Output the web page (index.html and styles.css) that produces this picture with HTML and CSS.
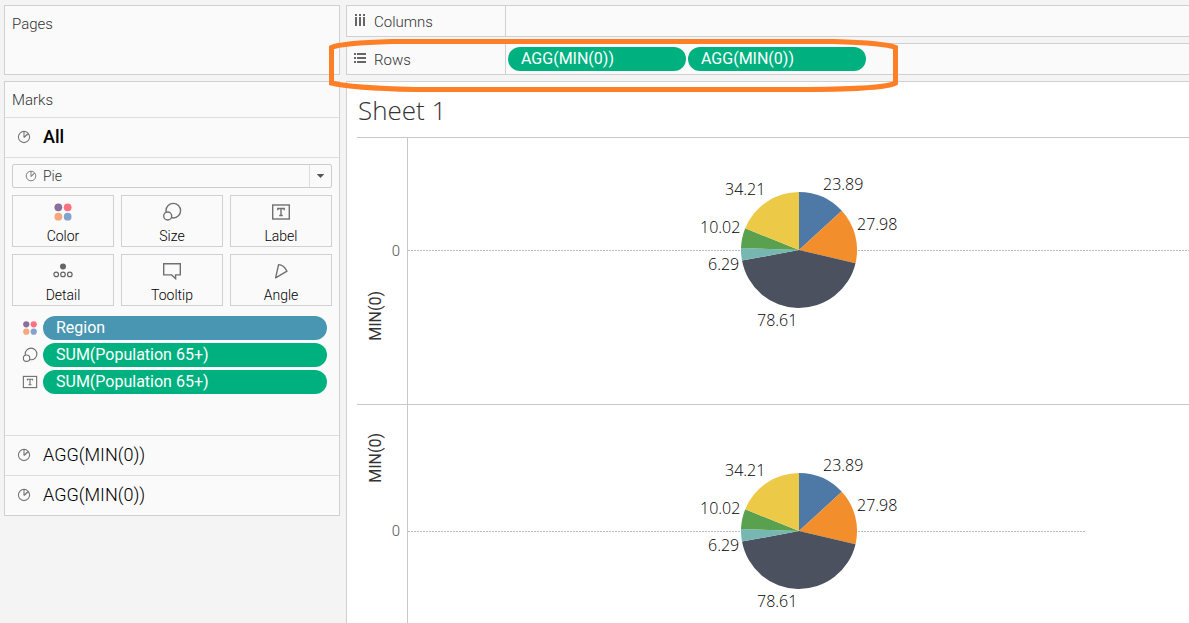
FILE: index.html
```html
<!DOCTYPE html>
<html lang="en">
<head>
<meta charset="utf-8">
<title>Sheet 1</title>
<link rel="stylesheet" href="styles.css">
</head>
<body>
<svg class="defs" aria-hidden="true">
  <symbol id="i-pie" viewBox="0 0 14 14"><g fill="none" stroke="#777" stroke-width="1.1"><circle cx="7" cy="7" r="5.6"/><path d="M7 7.5V1.4M7 7.5l4.4-3.9M7 7.5L10.5 4"/></g></symbol>
  <symbol id="i-color" viewBox="0 0 18 18"><circle cx="4.8" cy="4.8" r="3.5" fill="#8a709a"/><circle cx="13.2" cy="4.8" r="3.5" fill="#fb7181"/><circle cx="4.8" cy="13.2" r="3.5" fill="#f6a77c"/><circle cx="13.2" cy="13.2" r="3.5" fill="#82a3cd"/></symbol>
  <symbol id="i-size" viewBox="0 0 20 20"><g fill="#fafafa" stroke="#707070" stroke-width="1.4"><circle cx="11.3" cy="8.7" r="7.3"/><circle cx="5.7" cy="14" r="4"/></g></symbol>
  <symbol id="i-label" viewBox="0 0 20 20"><g fill="none" stroke="#707070" stroke-width="1.4"><rect x="1.7" y="3" width="16.6" height="14"/><path d="M6.8 8.2V6.5h6.4v1.7M10 6.5v7M8.2 13.5h3.6"/></g></symbol>
  <symbol id="i-detail" viewBox="0 0 20 20"><circle cx="10" cy="5.6" r="3" fill="#666"/><g fill="none" stroke="#666" stroke-width="1.2"><circle cx="3.2" cy="13.4" r="2.3"/><circle cx="10" cy="13.4" r="2.3"/><circle cx="16.8" cy="13.4" r="2.3"/></g></symbol>
  <symbol id="i-tooltip" viewBox="0 0 20 20"><path d="M1.7 2.7h16.6v11.2h-4.7v3.8l-3.9-3.8H1.7z" fill="none" stroke="#707070" stroke-width="1.4"/></symbol>
  <symbol id="i-angle" viewBox="0 0 20 20"><path d="M7.6 3.6L4.6 16.8l11.4-6.6Q13 4 7.6 3.6z" fill="none" stroke="#707070" stroke-width="1.4" stroke-linejoin="round"/></symbol>
  <symbol id="i-cols" viewBox="0 0 14 14"><path d="M3 1v2M7 1v2M11 1v2M3 4v9M7 4v9M11 4v9" stroke="#666" stroke-width="2"/></symbol>
  <symbol id="i-rows" viewBox="0 0 14 14"><path d="M1 3h2M1 7h2M1 11h2M4 3h9M4 7h9M4 11h9" stroke="#666" stroke-width="2"/></symbol>
  <symbol id="pie" viewBox="0 0 210 170">
    <path fill="#4e79a7" d="M105 85V27A58 58 0 0 1 147.8 45.8z"/>
    <path fill="#f28e2b" d="M105 85L147.8 45.8A58 58 0 0 1 161.5 98.2z"/>
    <path fill="#4b515e" d="M105 85L161.5 98.2A58 58 0 0 1 48 95.6z"/>
    <path fill="#76b7b2" d="M105 85L48 95.6A58 58 0 0 1 47 83z"/>
    <path fill="#59a14f" d="M105 85L47 83A58 58 0 0 1 51.2 63.3z"/>
    <path fill="#edc948" d="M105 85L51.2 63.3A58 58 0 0 1 105 27z"/>
  </symbol>
</svg>
<div class="app">
  <aside class="sidebar">
    <section class="panel pages"><h2>Pages</h2></section>
    <section class="panel marks">
      <h2>Marks</h2>
      <button class="mark-row active"><svg class="ic14"><use href="#i-pie"/></svg>All</button>
      <div class="card">
        <div class="type">
          <svg class="ic12"><use href="#i-pie"/></svg>
          <select aria-label="Mark type"><option>Pie</option></select>
          <svg class="arrow" viewBox="0 0 22 22"><path d="M7 9h8l-4 4z" fill="#555"/></svg>
        </div>
        <div class="buttons">
          <button><svg class="ic20"><use href="#i-color"/></svg>Color</button>
          <button><svg class="ic20"><use href="#i-size"/></svg>Size</button>
          <button><svg class="ic20"><use href="#i-label"/></svg>Label</button>
          <button><svg class="ic20"><use href="#i-detail"/></svg>Detail</button>
          <button><svg class="ic20"><use href="#i-tooltip"/></svg>Tooltip</button>
          <button><svg class="ic20"><use href="#i-angle"/></svg>Angle</button>
        </div>
        <div class="fields">
          <svg class="ic16"><use href="#i-color"/></svg><button class="pill dim">Region</button>
          <svg class="ic16"><use href="#i-size"/></svg><button class="pill">SUM(Population 65+)</button>
          <svg class="ic16"><use href="#i-label"/></svg><button class="pill">SUM(Population 65+)</button>
        </div>
      </div>
      <button class="mark-row"><svg class="ic14"><use href="#i-pie"/></svg>AGG(MIN(0))</button>
      <button class="mark-row"><svg class="ic14"><use href="#i-pie"/></svg>AGG(MIN(0))</button>
    </section>
  </aside>
  <main class="main">
    <div class="panel shelf">
      <div class="shelf-name"><svg class="ic14"><use href="#i-cols"/></svg>Columns</div>
      <div class="shelf-body"></div>
    </div>
    <div class="panel shelf">
      <div class="shelf-name"><svg class="ic14"><use href="#i-rows"/></svg>Rows</div>
      <div class="shelf-body"><button class="pill">AGG(MIN(0))</button><button class="pill">AGG(MIN(0))</button></div>
      <svg class="highlight" viewBox="0 0 572 56" aria-hidden="true"><path d="M2.5 9.5Q12 5 63 3.5H505Q556 5 566.5 9.5V45Q556 51 479 51.5H86Q22 50 2.5 45z"/></svg>
    </div>
    <section class="sheet">
      <h1>Sheet 1</h1>
      <div class="rows">
        <div class="row first">
          <div class="axis"><span class="tick">0</span><span class="axis-title">MIN(0)</span></div>
          <div class="plot">
            <div class="zero"></div>
            <svg class="chart" viewBox="0 0 210 170" role="img" aria-label="Pie chart of population by region">
              <use href="#pie"/>
              <text x="129" y="25">23.89</text><text x="163" y="65">27.98</text><text x="63" y="161">78.61</text><text x="14" y="105">6.29</text><text x="6" y="68">10.02</text><text x="31" y="30">34.21</text>
            </svg>
          </div>
        </div>
        <div class="row second">
          <div class="axis"><span class="axis-title">MIN(0)</span><span class="tick">0</span></div>
          <div class="plot">
            <div class="zero"></div>
            <svg class="chart" viewBox="0 0 210 170" role="img" aria-label="Pie chart of population by region">
              <use href="#pie"/>
              <text x="129" y="25">23.89</text><text x="163" y="65">27.98</text><text x="63" y="161">78.61</text><text x="14" y="105">6.29</text><text x="6" y="68">10.02</text><text x="31" y="30">34.21</text>
            </svg>
          </div>
        </div>
      </div>
    </section>
  </main>
</div>
</body>
</html>
```
FILE: styles.css
```css
* { box-sizing: border-box; }
body { margin: 0; background: #f4f4f4; color: #333; font: 300 15px/20px Roboto, "Liberation Sans", sans-serif; }
h1, h2 { margin: 0; font-weight: 300; }
button, select { font: inherit; color: inherit; margin: 0; padding: 0; border: 0; background: none; }
svg { display: block; flex: none; }
.defs { position: absolute; width: 0; height: 0; }
.ic12 { width: 12px; height: 12px; }
.ic14 { width: 14px; height: 14px; }
.ic16 { width: 16px; height: 16px; }
.ic20 { width: 20px; height: 20px; }

.app { display: grid; grid-template-columns: 336px minmax(0, 1fr); gap: 6px; min-height: 100vh; padding: 5px 0 0 4px; overflow: hidden; }
.panel { background: #fafafa; border: 1px solid #d0d0d0; }
.panel h2 { font-size: 15px; padding: 8px 7px 7px; }
.sidebar { display: flex; flex-direction: column; gap: 6px; }
.pages { height: 70px; }
.marks > h2 { border-bottom: 1px solid #ddd; }

.mark-row { display: flex; align-items: center; gap: 12px; width: 100%; height: 40px; padding: 0 12px 2px; border-top: 1px solid #ddd; font-size: 18px; color: #000; text-align: left; }
.mark-row.active { border-top: 0; border-bottom: 1px solid #ddd; font-weight: 500; }

.card { padding: 6px 7px 41px; }
.type { display: grid; grid-template-columns: 30px 1fr 22px; align-items: center; height: 24px; border: 1px solid #ccc; border-radius: 2px; }
.type .ic12 { justify-self: end; margin-right: 6px; }
.type select { appearance: none; font-size: 14px; height: 22px; }
.arrow { width: 22px; height: 22px; border-left: 1px solid #ddd; }
.buttons { display: grid; grid-template-columns: repeat(3, 1fr); gap: 7px; margin-top: 7px; }
.buttons button { display: flex; flex-direction: column; align-items: center; gap: 4px; height: 52px; padding-top: 6px; border: 1px solid #d0d0d0; font-size: 14px; color: #000; }
.fields { display: grid; grid-template-columns: 16px 1fr; align-items: center; gap: 3px 5px; margin-top: 10px; padding: 0 5px 0 10px; }

.pill { height: 24px; padding: 0 13px; border-radius: 12px; background: #00b180; color: #fff; font-size: 16px; font-weight: 400; text-align: left; }
.pill.dim { background: #4996b2; }

.main { display: flex; flex-direction: column; gap: 6px; min-width: 0; }
.main .panel { border-right: 0; }
.shelf { display: flex; position: relative; height: 32px; }
.shelf-name { display: flex; align-items: center; gap: 7px; width: 159px; padding: 2px 0 0 6px; border-right: 1px solid #d0d0d0; }
.shelf-name svg { margin-bottom: 4px; }
.shelf-body { display: flex; align-items: center; gap: 2px; padding-left: 2px; }
.shelf-body .pill { width: 178px; }
.highlight { position: absolute; left: -18px; top: -6px; width: 572px; height: 56px; z-index: 1; pointer-events: none; }
.highlight path { fill: none; stroke: #ff7f27; stroke-width: 5; }

.sheet { display: flex; flex-direction: column; flex: 1; padding-left: 10px; background: #fff; border: solid #d0d0d0; border-width: 1px 0 0 1px; }
.sheet h1 { padding: 13px 1px 12px; font: 300 26px/30px "Open Sans", "Noto Sans", sans-serif; color: #333; }
.rows { display: flex; flex-direction: column; flex: 1; }
.row { display: grid; grid-template-columns: 51px minmax(0, 1fr); border-top: 1px solid #c8c8c8; }
.first { height: 267px; }
.second { flex: 1; }
.axis { display: flex; flex-direction: column; align-items: flex-start; border-right: 1px solid #c8c8c8; }
.tick { align-self: flex-end; margin-right: 7px; color: #555; }
.axis-title { writing-mode: vertical-rl; transform: rotate(180deg); margin-left: 9px; font-size: 16px; font-weight: 400; color: #333; }
.first .axis { padding-top: 103px; gap: 30px; }
.second .axis { padding-top: 28px; gap: 38px; }
.plot { display: grid; align-content: start; justify-items: center; }
.first .plot { padding-top: 27px; }
.second .plot { padding-top: 41px; }
.zero, .chart { grid-area: 1 / 1; }
.zero { align-self: center; justify-self: stretch; height: 1px; background: repeating-linear-gradient(to right, #bbb 0 2px, transparent 2px 3px); }
.second .zero { margin-right: 104px; }
.chart { width: 210px; height: 170px; }
.chart text { font: 300 16px "Open Sans", "Noto Sans", sans-serif; fill: #000; }
```
